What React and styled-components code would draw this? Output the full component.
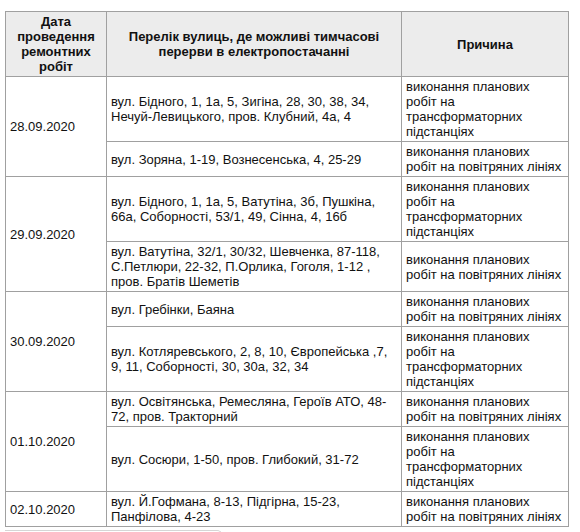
import React from "react";
import styled, { createGlobalStyle } from "styled-components";

const TRAFO = "робіт на трансформаторних підстанціях";
const LINES = "робіт на повітряних лініях";

const schedule = [
  {
    date: "28.09.2020",
    items: [
      {
        streets:
          "вул. Бідного, 1, 1а, 5, Зигіна, 28, 30, 38, 34, Нечуй-Левицького, пров. Клубний, 4а, 4",
        reason: TRAFO,
      },
      { streets: "вул. Зоряна, 1-19, Вознесенська, 4, 25-29", reason: LINES },
    ],
  },
  {
    date: "29.09.2020",
    items: [
      {
        streets:
          "вул. Бідного, 1, 1а, 5, Ватутіна, 3б, Пушкіна, 66а, Соборності, 53/1, 49, Сінна, 4, 16б",
        reason: TRAFO,
      },
      {
        streets:
          "вул. Ватутіна, 32/1, 30/32, Шевченка, 87-118, С.Петлюри, 22-32, П.Орлика, Гоголя, 1-12 , пров. Братів Шеметів",
        reason: LINES,
      },
    ],
  },
  {
    date: "30.09.2020",
    items: [
      { streets: "вул. Гребінки, Баяна", reason: LINES },
      {
        streets:
          "вул. Котляревського, 2, 8, 10, Європейська ,7, 9, 11, Соборності, 30, 30а, 32, 34",
        reason: TRAFO,
      },
    ],
  },
  {
    date: "01.10.2020",
    items: [
      {
        streets:
          "вул. Освітянська, Ремесляна, Героїв АТО, 48-72, пров. Тракторний",
        reason: LINES,
      },
      { streets: "вул. Сосюри, 1-50, пров. Глибокий, 31-72", reason: TRAFO },
    ],
  },
  {
    date: "02.10.2020",
    items: [
      {
        streets: "вул. Й.Гофмана, 8-13, Підгірна, 15-23, Панфілова, 4-23",
        reason: LINES,
      },
    ],
  },
];

const GlobalStyle = createGlobalStyle`
  body {
    margin: 0;
    background: #fff;
    font-family: "Liberation Sans", Arial, sans-serif;
    color: #111;
  }
`;

const Page = styled.div`
  padding: 11px 0 0 5px;
`;

const Table = styled.table`
  width: 563px;
  border-collapse: collapse;
  table-layout: fixed;
  border: 1px solid #a0a0a0;
  font-size: 13px;
  line-height: 15px;
`;

const Cell = styled.td`
  border: 1px solid #a0a0a0;
  padding: 2px 4px;
  vertical-align: middle;
  text-align: left;
`;

const HeadCell = styled.th`
  border: 1px solid #a0a0a0;
  padding: 2px 4px;
  background: #ececec;
  font-weight: bold;
  text-align: center;
  vertical-align: middle;
`;

// first line of every reason is the same, so it sits on its own line
const ReasonLead = styled.span`
  display: block;
`;

const ScrollEdge = styled.div`
  width: 216px;
  height: 8px;
  margin-top: 3px;
  border-top: 1px solid #d6d6d6;
  border-right: 1px solid #d6d6d6;
  border-top-right-radius: 5px;
`;

export default function App() {
  return (
    <>
      <GlobalStyle />
      <Page>
        <Table>
          <colgroup>
            <col style={{ width: 101 }} />
            <col style={{ width: 295 }} />
            <col style={{ width: 167 }} />
          </colgroup>
          <thead>
            <tr>
              <HeadCell>Дата проведення ремонтних робіт</HeadCell>
              <HeadCell>
                Перелік вулиць, де можливі тимчасові перерви в
                електропостачанні
              </HeadCell>
              <HeadCell>Причина</HeadCell>
            </tr>
          </thead>
          <tbody>
            {schedule.map((day) =>
              day.items.map((item, i) => (
                <tr key={day.date + i}>
                  {i === 0 && (
                    <Cell rowSpan={day.items.length}>{day.date}</Cell>
                  )}
                  <Cell>{item.streets}</Cell>
                  <Cell>
                    <ReasonLead>виконання планових</ReasonLead>
                    {item.reason}
                  </Cell>
                </tr>
              ))
            )}
          </tbody>
        </Table>
        <ScrollEdge />
      </Page>
    </>
  );
}
